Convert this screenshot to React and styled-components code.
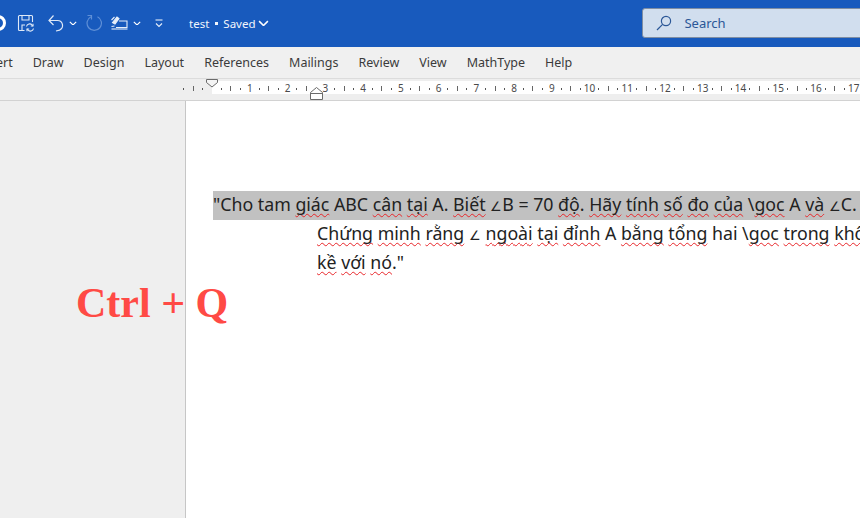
import React from 'react'
import styled, { createGlobalStyle } from 'styled-components'

const GlobalStyle = createGlobalStyle`
html, body, #root {
  margin: 0;
  padding: 0;
  width: 100%;
  height: 100%;
  overflow: hidden;
}
body {
  font-family: "Noto Sans", "Open Sans", sans-serif;
}
`

const tabs = ['Insert', 'Draw', 'Design', 'Layout', 'References', 'Mailings', 'Review', 'View', 'MathType', 'Help']

// one slot is a quarter of a centimetre on the ruler
const rulerSlots = [{ kind: 'dot' }, { kind: 'bar' }, { kind: 'dot' }]
for (let cm = 0; cm <= 17; cm++) {
  rulerSlots.push({ kind: 'num', label: cm === 0 ? '' : String(cm) })
  rulerSlots.push({ kind: 'dot' }, { kind: 'bar' }, { kind: 'dot' })
}

function Chevron({ size = 8, color = '#fff' }) {
  return (
    <svg width={size} height={size * 0.6} viewBox="0 0 10 6" fill="none" stroke={color} strokeWidth="1.4">
      <path d="M1 1l4 4 4-4" />
    </svg>
  )
}

function SaveIcon() {
  return (
    <svg width="18" height="18" viewBox="0 0 18 18" fill="none" stroke="#dfe9f7" strokeWidth="1.1">
      <path d="M7.500 16.500H2.500a1 1 0 0 1-1-1V2.500a1 1 0 0 1 1-1h12a1 1 0 0 1 1 1v5.500" />
      <path d="M5 1.500v4.500h7V1.500M5 16v-5h3" />
      <path d="M9.500 12.500a3.200 3.200 0 0 1 5.600-1.400l.9 1M16.500 14.500a3.200 3.200 0 0 1-5.600 1.400l-.9-1" />
      <path d="M16 9.800V12h-2.200M10 17.200V15h2.200" />
    </svg>
  )
}

function UndoIcon() {
  return (
    <svg width="16" height="18" viewBox="0 0 16 18" fill="none" stroke="#dfe9f7" strokeWidth="1.2">
      <path d="M1 6.500h8.500a5 5 0 0 1 2 9.600L8 17" />
      <path d="M5.500 1.500L1 6.500l4.500 4.500" />
    </svg>
  )
}

function RedoIcon() {
  return (
    <svg width="17" height="18" viewBox="0 0 17 18" fill="none" stroke="#5f8fd6" strokeWidth="1.2">
      <path d="M11.500 2.800a7.200 7.200 0 1 1-6.500 0" />
      <path d="M1.500 1.500h4v4" />
    </svg>
  )
}

function TouchIcon() {
  return (
    <svg width="17" height="14" viewBox="0 0 17 14" fill="none" stroke="#e6eef9" strokeWidth="1.1">
      <path d="M8 5h8v6.500H5" />
      <path d="M.5 13h16" />
      <path d="M1.500 6.500L6 1l2 1.500L4 8z" fill="#e6eef9" />
      <path d="M.5 4l3-3M.5 10.500l3-.5" />
    </svg>
  )
}

function QatIcon() {
  return (
    <svg width="8" height="9" viewBox="0 0 8 9" fill="none" stroke="#e6eef9" strokeWidth="1.1">
      <path d="M.5 1h7" />
      <path d="M1 4.500l3 3 3-3" />
    </svg>
  )
}

function SearchIcon() {
  return (
    <svg width="16" height="16" viewBox="0 0 16 16" fill="none" stroke="#2b5797" strokeWidth="1.2">
      <circle cx="10" cy="6" r="4.600" />
      <path d="M6.600 9.400L1 15" />
    </svg>
  )
}

function TopIndent() {
  return (
    <svg width="14" height="9" viewBox="0 0 14 9" fill="#f4f4f4" stroke="#6b6b6b" strokeWidth="1">
      <path d="M1.500.5h11v3L7 8 1.500 3.500z" />
    </svg>
  )
}

function BottomIndent() {
  return (
    <svg width="13" height="13" viewBox="0 0 13 13" fill="#fff" stroke="#6b6b6b" strokeWidth="1">
      <path d="M.5 5.500L6.500.5l6 5v7H.5z" />
      <path d="M.5 6.500h12" />
    </svg>
  )
}

export default function App() {
  return (
    <Shell>
      <GlobalStyle />
      <TitleBar>
        <Knob />
        <IconSlot $w={18} $ml={11}><SaveIcon /></IconSlot>
        <IconSlot $w={16} $ml={13}><UndoIcon /></IconSlot>
        <IconSlot $w={8} $ml={5}><Chevron /></IconSlot>
        <IconSlot $w={17} $ml={9}><RedoIcon /></IconSlot>
        <IconSlot $w={17} $ml={8}><TouchIcon /></IconSlot>
        <IconSlot $w={8} $ml={5}><Chevron /></IconSlot>
        <IconSlot $w={8} $ml={14}><QatIcon /></IconSlot>
        <DocName $ml={26}>test</DocName>
        <Bullet />
        <DocName $ml={5}>Saved</DocName>
        <IconSlot $w={11} $ml={3}><Chevron size={11} /></IconSlot>
        <SearchBox>
          <SearchIcon />
          <SearchText>Search</SearchText>
        </SearchBox>
      </TitleBar>

      <TabBar>
        {tabs.map((t) => (
          <Tab key={t}>{t}</Tab>
        ))}
      </TabBar>

      <RulerBar>
        <RulerTrack>
          {rulerSlots.map((s, i) => (
            <RulerSlot key={i}>
              {s.kind === 'num' && <RulerNum>{s.label}</RulerNum>}
              {s.kind === 'dot' && <RulerDot />}
              {s.kind === 'bar' && <RulerTick />}
            </RulerSlot>
          ))}
        </RulerTrack>
        <TopMarker><TopIndent /></TopMarker>
        <BottomMarker><BottomIndent /></BottomMarker>
      </RulerBar>

      <Workspace>
        <SidePane />
        <Page>
          <Line $selected>
            "Cho tam <Sq>giác</Sq> ABC <Sq>cân</Sq> <Sq>tại</Sq> A. <Sq>Biết</Sq> <Angle>∠</Angle>B = 70 <Sq>độ</Sq>. <Sq>Hãy</Sq> <Sq>tính</Sq> <Sq>số</Sq> <Sq>đo</Sq> <Sq>của</Sq> \<Sq>goc</Sq> A <Sq>và</Sq> <Angle>∠</Angle>C.
          </Line>
          <Line $indent>
            <Sq>Chứng</Sq> <Sq>minh</Sq> <Sq>rằng</Sq> <Angle>∠</Angle> <Sq>ngoài</Sq> <Sq>tại</Sq> <Sq>đỉnh</Sq> A <Sq>bằng</Sq> <Sq>tổng</Sq> hai \<Sq>goc</Sq> <Sq>trong</Sq> <Sq>không</Sq>
          </Line>
          <Line $indent>
            <Sq>kề</Sq> <Sq>với</Sq> <Sq>nó</Sq>."
          </Line>
        </Page>
        <Shortcut>Ctrl + Q</Shortcut>
      </Workspace>
    </Shell>
  )
}

const Shell = styled.div`
  width: 860px;
  height: 518px;
  display: flex;
  flex-direction: column;
  overflow: hidden;
  background: #fff;
`

const TitleBar = styled.div`
  height: 47px;
  flex: none;
  box-sizing: border-box;
  padding-bottom: 1px;
  display: flex;
  align-items: center;
  background: #185abd;
  color: #fff;
`

const Knob = styled.div`
  width: 10px;
  height: 10px;
  margin-left: -10px;
  border: 3px solid #fff;
  border-radius: 50%;
  flex: none;
`

const IconSlot = styled.div`
  width: ${(p) => p.$w}px;
  margin-left: ${(p) => p.$ml}px;
  flex: none;
  display: flex;
  align-items: center;
  justify-content: center;
`

const DocName = styled.span`
  font-size: 11.500px;
  color: #f2f6fc;
  margin-left: ${(p) => p.$ml}px;
`

const Bullet = styled.span`
  width: 3px;
  height: 3px;
  margin-left: 6px;
  background: #f2f6fc;
  flex: none;
`

const SearchBox = styled.div`
  width: 240px;
  height: 30px;
  margin-left: 373px;
  flex: none;
  box-sizing: border-box;
  display: flex;
  align-items: center;
  gap: 12px;
  padding-left: 13px;
  background: #d1deee;
  border: 1px solid #7f8ea3;
  border-radius: 3px;
`

const SearchText = styled.span`
  font-size: 13px;
  color: #2b5797;
`

const TabBar = styled.div`
  height: 31px;
  flex: none;
  display: flex;
  align-items: center;
  gap: 20px;
  margin-left: -22px;
  background: #f0f0f0;
  font-size: 12.500px;
  color: #3b3b3b;
`

const Tab = styled.span`
  white-space: nowrap;
`

const RulerBar = styled.div`
  position: relative;
  height: 23px;
  flex: none;
  box-sizing: border-box;
  padding-top: 3px;
  background: #eeeeee;
  border-top: 1px solid #dcdcdc;
  border-bottom: 1px solid #d2d2d2;
  background-image: linear-gradient(#fff, #fff);
  background-size: 648px 13px;
  background-position: 212px 2px;
  background-repeat: no-repeat;
`

const RulerTrack = styled.div`
  height: 13px;
  display: flex;
  margin-left: 179px;
`

const RulerSlot = styled.div`
  width: 9.450px;
  flex: none;
  display: flex;
  align-items: center;
  justify-content: center;
`

const RulerNum = styled.span`
  font-size: 10px;
  color: #4a4a4a;
  line-height: 13px;
`

const RulerDot = styled.span`
  width: 1px;
  height: 2px;
  background: #555;
`

const RulerTick = styled.span`
  width: 1px;
  height: 5px;
  background: #666;
`

const TopMarker = styled.div`
  position: absolute;
  left: 205px;
  top: 0;
  line-height: 0;
`

const BottomMarker = styled.div`
  position: absolute;
  left: 310px;
  top: 8px;
  line-height: 0;
`

const Workspace = styled.div`
  position: relative;
  flex: 1;
  display: flex;
  min-height: 0;
`

const SidePane = styled.div`
  width: 185px;
  flex: none;
  background: #efefef;
  border-right: 1px solid #c6c6c6;
`

const Page = styled.div`
  flex: 1;
  min-width: 0;
  overflow: hidden;
  padding: 90px 0 0 27px;
  background: #fff;
  font-size: 17.750px;
  line-height: 26px;
  color: #222;
`

const Line = styled.div`
  white-space: pre;
  height: 29px;
  margin-left: ${(p) => (p.$indent ? 104 : 0)}px;
  background: ${(p) => (p.$selected ? '#c1c1c1' : 'transparent')};
`

const Sq = styled.span`
  text-decoration: underline wavy #e8262a 1px;
  text-underline-offset: 2px;
  text-decoration-skip-ink: none;
`

const Angle = styled.span`
  font-size: 13px;
`

const Shortcut = styled.div`
  position: absolute;
  left: 76px;
  top: 176px;
  font-family: "Liberation Serif", serif;
  font-weight: bold;
  font-size: 42px;
  line-height: 52px;
  color: #ff4a45;
  white-space: nowrap;
`
